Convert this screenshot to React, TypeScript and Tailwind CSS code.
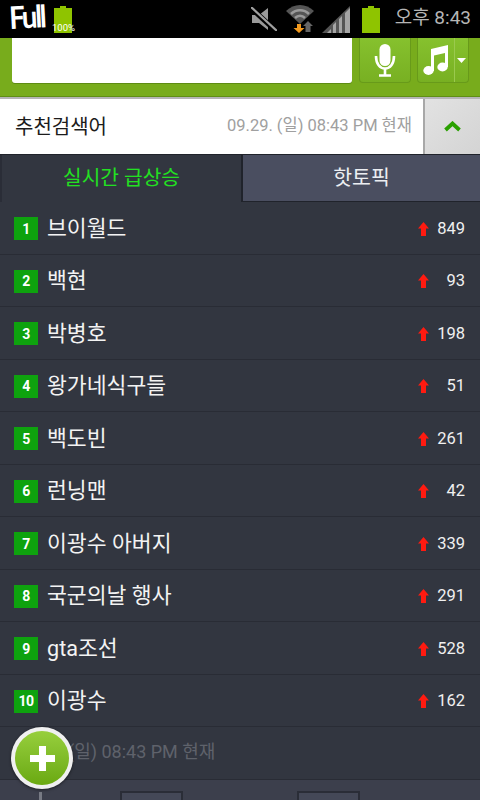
const rows: [string, string][] = [
  ["브이월드", "849"],
  ["백현", "93"],
  ["박병호", "198"],
  ["왕가네식구들", "51"],
  ["백도빈", "261"],
  ["런닝맨", "42"],
  ["이광수 아버지", "339"],
  ["국군의날 행사", "291"],
  ["gta조선", "528"],
  ["이광수", "162"],
];

function ArrowUp() {
  return (
    <svg width="11" height="14" viewBox="0 0 11 14" className="shrink-0 block">
      <path d="M5.5 0 L11 6.5 H8 V14 H3 V6.5 H0 Z" fill="#ff1a10" />
    </svg>
  );
}

function Battery({ cls }: { cls?: string }) {
  return (
    <svg width="18" height="27" viewBox="0 0 18 27" className={cls}>
      <path d="M6 0H12V2H18V27H0V2H6Z" fill="#8fc400" />
    </svg>
  );
}

export default function App() {
  return (
    <div className="w-[480px] h-[800px] overflow-hidden relative bg-[#323640] font-['Roboto','Noto_Sans_CJK_KR',sans-serif]">
      {/* status bar */}
      <div className="h-[38px] bg-black flex items-center">
        <span className="ml-[9px] w-[36px] text-white text-[31px] leading-[32px] font-bold tracking-[-2.5px] whitespace-nowrap -rotate-3 -mt-[5px] font-['Liberation_Sans_Narrow','Lato',sans-serif] scale-x-90 origin-left">Full</span>
        <div className="ml-[7px] relative w-[22px] h-[38px]">
          <Battery cls="absolute left-[2px] top-[6px]" />
          <span className="absolute left-0 top-[23px] text-[9.5px] leading-[10px] text-white">100%</span>
        </div>
        <div className="ml-auto flex items-center">
          <svg width="26" height="24" viewBox="0 0 26 24" className="mr-[9px]">
            <path d="M1 8H8L17 1V23L8 16H1Z" fill="#9a9a9a" />
            <path d="M0 1L25 24" stroke="#000" strokeWidth="5" />
            <path d="M0 0L26 24" stroke="#a0a0a0" strokeWidth="2.2" />
          </svg>
          <svg width="28" height="28" viewBox="0 0 28 28" className="mr-[8px]">
            <path d="M0 6C8 -2 20 -2 28 6L14 19Z" fill="#555" />
            <path d="M5 9C10 4 18 4 23 9" stroke="#9a9a9a" strokeWidth="2.5" fill="none" />
            <path d="M9 13C12 10 16 10 19 13" stroke="#9a9a9a" strokeWidth="2.5" fill="none" />
            <path d="M11 19H15V23H18.5L13 28L7.5 23H11Z" fill="#f39a1e" />
            <path d="M22 16L27 21H24.5V27H19.5V21H17Z" fill="#666" />
          </svg>
          <svg width="28" height="27" viewBox="0 0 28 27" className="mr-[12px]">
            <path d="M0 27L28 0V27Z" fill="#555" />
            <path d="M5 27L9 23V27ZM11 27V19L14 16V27ZM17 27V13L20 10V27ZM23 27V7L28 2V27Z" fill="#a5a5a5" />
          </svg>
          <Battery cls="mr-[15px]" />
          <span className="text-[#b5b5b5] text-[19px] leading-none mr-[9px] -mt-[3px]">오후 8:43</span>
        </div>
      </div>

      {/* search bar */}
      <div className="h-[59px] bg-[#78ac1c] flex items-start pl-[12px] border-b border-[#5f8f14]">
        <div className="w-[340px] h-[45px] bg-white rounded-b-[3px] shadow-[0_1px_0_#5e8c13]" />
        <div className="ml-[7px] w-[52px] h-[45px] bg-gradient-to-b from-[#86c12e] to-[#78b022] rounded-b-[4px] border border-t-0 border-[#689a1a] flex items-center justify-center">
          <svg width="22" height="33" viewBox="0 0 22 33">
            <rect x="5.5" y="0" width="11" height="22" rx="5.5" fill="#fff" />
            <path d="M2 12C2 20 6 24.5 11 24.5C16 24.5 20 20 20 12" stroke="#fff" strokeWidth="2.6" fill="none" />
            <path d="M11 24V31M5 31.5H17" stroke="#fff" strokeWidth="2.6" />
          </svg>
        </div>
        <div className="ml-[6px] w-[52px] h-[45px] bg-gradient-to-b from-[#86c12e] to-[#78b022] rounded-b-[4px] border border-t-0 border-[#689a1a] flex">
          <div className="w-[36px] flex items-center justify-center">
            <svg width="26" height="30" viewBox="0 0 26 30">
              <path d="M8 4L25 0V22H22V8L11 10.5V26H8Z" fill="#fff" />
              <ellipse cx="5.5" cy="25.5" rx="5.2" ry="4.4" fill="#fff" />
              <ellipse cx="19.5" cy="22" rx="5.2" ry="4.4" fill="#fff" />
            </svg>
          </div>
          <div className="flex-1 border-l border-[#9ac94e] flex items-center justify-center">
            <svg width="9" height="5" viewBox="0 0 9 5"><path d="M0 0H9L4.5 5Z" fill="#fff" /></svg>
          </div>
        </div>
      </div>

      {/* title row */}
      <div className="h-[58px] border-t-2 border-t-[#b5b5b5] border-b border-b-[#20232b] bg-white flex items-center">
        <span className="ml-[15px] text-[20px] leading-none text-[#1c1c1c]">추천검색어</span>
        <span className="ml-auto mr-[11px] text-[#a0a0a0] text-[16.5px] leading-none">09.29. (일) 08:43 PM 현재</span>
        <div className="w-[57px] h-full bg-gradient-to-br from-[#e2e2e2] to-[#d4d4d4] border-l-2 border-l-[#a8a8a8] flex items-center justify-center">
          <svg width="17" height="11" viewBox="0 0 17 11">
            <path d="M1.5 9L8.5 2.5L15.5 9" stroke="#2aa000" strokeWidth="3.8" fill="none" />
          </svg>
        </div>
      </div>

      {/* tabs */}
      <div className="h-[47px] flex">
        <div className="w-[241px] flex items-center justify-center bg-[#323640] border-l-2 border-l-[#2a2d37] text-[#22e022] text-[20.3px] leading-none">실시간 급상승</div>
        <div className="flex-1 flex items-center justify-center bg-[#4a4e60] border-l-2 border-b border-[#20232b] text-[#eceef2] text-[20.5px] leading-none">핫토픽</div>
      </div>

      {/* list */}
      <div className="flex flex-col">
        {rows.map(([name, n], i) => (
          <div key={name} className="h-[52.5px] flex items-center pt-[2px] pl-[14px] pr-[15px] border-b border-[#292c35]">
            <span className="w-[24px] h-[23px] bg-[#0ea20e] flex items-center justify-center text-white text-[14px] font-bold leading-none tracking-[-0.5px]">{i + 1}</span>
            <span className="ml-[9px] text-[#f3f3f3] text-[21.6px] leading-none">{name}</span>
            <span className="ml-auto"><ArrowUp /></span>
            <span className="w-[36px] text-right text-[#f0f0f0] text-[16.5px] leading-none">{n}</span>
          </div>
        ))}
        <div className="h-[53px] flex items-center pb-[2px] pl-[68px] text-[#5f626b] text-[18px] leading-none border-b border-[#292c35]">(일) 08:43 PM 현재</div>
        <div className="h-[30px] bg-[#3c3f4c] flex">
          <div className="ml-[39px] mt-[12px] w-[3px] h-[18px] bg-[#777a84]" />
          <div className="ml-[78px] mt-[11px] w-[63px] h-[20px] bg-[#444857] border-2 border-b-0 border-[#2a2d37]" />
          <div className="ml-[114px] mt-[11px] w-[63px] h-[20px] bg-[#444857] border-2 border-b-0 border-[#2a2d37]" />
        </div>
      </div>

      {/* floating button */}
      <div className="absolute left-[11px] top-[727px] w-[62px] h-[62px] rounded-full bg-[#f0f0f0] p-[4px] shadow-[0_1px_3px_rgba(0,0,0,0.5)]">
        <div className="w-full h-full rounded-full bg-gradient-to-b from-[#97cf3c] to-[#6aa90f] flex items-center justify-center">
          <svg width="25" height="25" viewBox="0 0 25 25"><path d="M9 0H16V9H25V16H16V25H9V16H0V9H9Z" fill="#fff" /></svg>
        </div>
      </div>
    </div>
  );
}
